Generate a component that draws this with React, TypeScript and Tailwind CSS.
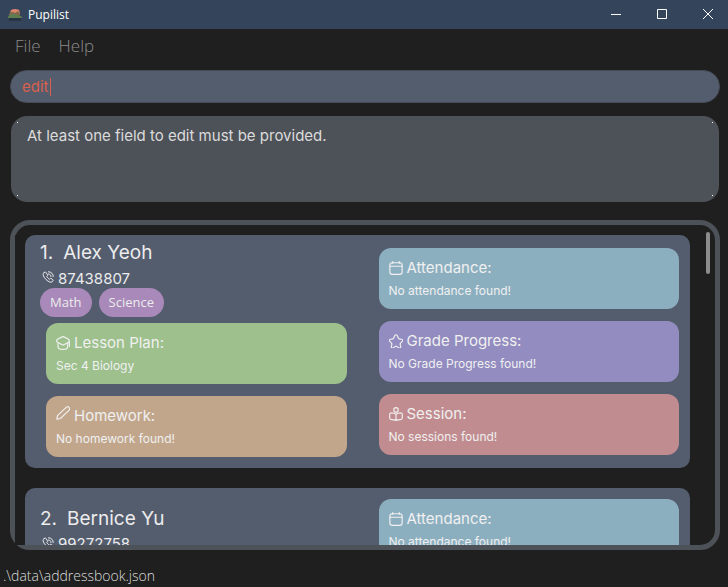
import { useState, type ReactNode } from "react";

type IconName = "phone" | "cap" | "pencil" | "calendar" | "star" | "reader";

const iconShapes: Record<IconName, ReactNode> = {
  phone: (
    <>
      <path d="M5 2.500 3 4.500c-2 2.500 0 7.500 5 12.500s10 6.500 12.500 4.500l1.500-2c.6-.8.4-1.600-.4-2.200l-3.300-2.300c-.8-.5-1.600-.4-2.200.3l-1 1.200c-1.800-.6-5-3.700-5.600-5.600l1.200-1c.7-.6.8-1.400.3-2.200L8 3C7.200 1.900 6 1.500 5 2.500Z" />
      <path d="M13 1.500c5.500 0 9.500 4 9.500 9.500M13 6c3 0 5 2 5 5" />
    </>
  ),
  cap: (
    <>
      <path d="M10.500 1.500 2.500 5.500c-1.800 1.200-1.800 4 0 5.200l8 4.200c1 .6 2 .6 3 0l8-4.200c1.500-1 1.500-4 0-5.200l-8-4c-1-.6-2-.6-3 0Z" />
      <path d="M3.500 12.500v6c0 3 4.500 4.500 8.500 4.500s8-1.500 8-4.500v-6M23 9v9" />
    </>
  ),
  pencil: (
    <path d="M18 2 2.500 16.500 1.500 22.500l6-1L22.500 7c1-1.500 1-3-.3-4.500S19.500.8 18 2Z" />
  ),
  calendar: (
    <>
      <rect x="1.500" y="3" width="21" height="20" rx="4" />
      <path d="M1.500 9h21M6.500 1v3M17.500 1v3" />
    </>
  ),
  star: (
    <path d="m14.200 3 2 4.200c.3.600 1 1.100 1.700 1.200l3.500.600c2.300.4 2.800 2 1.200 3.700l-2.800 2.900c-.5.500-.7 1.400-.6 2l.8 3.500c.6 2.700-.8 3.700-3.200 2.300l-3.600-2.100c-.6-.4-1.700-.4-2.300 0l-3.600 2.100c-2.400 1.400-3.800.4-3.200-2.300l.8-3.500c.1-.6-.1-1.500-.6-2l-2.800-2.900c-1.600-1.700-1.100-3.300 1.200-3.700l3.500-.6c.6-.1 1.400-.6 1.700-1.200L9.800 3c1.100-2.200 3.300-2.200 4.400 0Z" />
  ),
  reader: (
    <>
      <circle cx="12" cy="5" r="3.800" />
      <path d="M12 12.500v10M12 12.500C9.500 10.800 7 10 4.500 10c-2 0-3.300 1-3.300 3V18.500c0 2 1.300 3 3.300 3 2.500 0 5 .3 7.500 1.500 2.500-1.200 5-1.500 7.500-1.500 2 0 3.300-1 3.300-3V13c0-2-1.300-3-3.300-3-2.500 0-5 .8-7.500 2.500Z" />
    </>
  ),
};

function Icon({ name, className }: { name: IconName; className: string }) {
  return (
    <svg viewBox="0 0 24 24" fill="none" stroke="currentColor" strokeWidth="2" strokeLinecap="round" strokeLinejoin="round" className={className} aria-hidden="true">
      {iconShapes[name]}
    </svg>
  );
}

type Section = { icon: IconName; title: string; text: string; color: string };

function InfoCard({ icon, title, text, color }: Section) {
  return (
    <section className={`m-[6px] rounded-xl px-[10px] py-2 text-[#f0f0f0] ${color}`}>
      <h3 className="flex items-center gap-1 text-[15px] leading-6">
        <Icon name={icon} className={icon === "pencil" ? "mb-[6px] size-[14px] shrink-0" : "size-[14px] shrink-0"} />
        {title}
      </h3>
      <p className="text-[12px] leading-[21px]">{text}</p>
    </section>
  );
}

type Pupil = { id: number; name: string; phone: string; tags: string[]; work: Section[]; records: Section[] };

const attendance: Section = { icon: "calendar", title: "Attendance:", text: "No attendance found!", color: "bg-[#8cafc0]" };

const pupils: Pupil[] = [
  {
    id: 1,
    name: "Alex Yeoh",
    phone: "87438807",
    tags: ["Math", "Science"],
    work: [
      { icon: "cap", title: "Lesson Plan:", text: "Sec 4 Biology", color: "bg-[#9dc08d]" },
      { icon: "pencil", title: "Homework:", text: "No homework found!", color: "bg-[#c1a68c]" },
    ],
    records: [
      attendance,
      { icon: "star", title: "Grade Progress:", text: "No Grade Progress found!", color: "bg-[#928cc0]" },
      { icon: "reader", title: "Session:", text: "No sessions found!", color: "bg-[#c18c8f]" },
    ],
  },
  { id: 2, name: "Bernice Yu", phone: "99272758", tags: [], work: [], records: [attendance] },
];

function PupilCard({ pupil }: { pupil: Pupil }) {
  return (
    <li className="grid shrink-0 grid-cols-2 items-center gap-x-5 rounded-[10px] bg-[#545d6e] py-[5px] pr-[5px] pl-[15px] text-[#ececec]">
      <div>
        <h2 className="flex gap-[10px] text-[19px] leading-[26px]">
          <span>{pupil.id}.</span>
          {pupil.name}
        </h2>
        <p className="flex h-[22px] items-center gap-1 pt-1 pl-[2px] text-[15px]">
          <Icon name="phone" className="mb-1 size-3" />
          {pupil.phone}
        </p>
        {pupil.tags.length > 0 && (
          <ul className="flex gap-[7px] font-['Open_Sans',sans-serif] text-[13px] leading-[29px] font-medium">
            {pupil.tags.map((tag) => (
              <li key={tag} className="rounded-full bg-[#a889b9] px-[10px]">{tag}</li>
            ))}
          </ul>
        )}
        <div className="flex flex-col">
          {pupil.work.map((section) => (
            <InfoCard key={section.title} {...section} />
          ))}
        </div>
      </div>
      <div className="flex flex-col">
        {pupil.records.map((section) => (
          <InfoCard key={section.title} {...section} />
        ))}
      </div>
    </li>
  );
}

function TitleBar() {
  return (
    <header className="flex h-[29px] shrink-0 items-center overflow-hidden bg-[#34455b] pl-2 font-['Open_Sans',sans-serif] text-white">
      <svg viewBox="0 0 14 14" className="size-[14px]" aria-hidden="true">
        <path d="M3 2Q7 0 11 2l1 3H2Z" fill="#dc8670" />
        <path d="M2 4h3l2 1 3-2 2 2v2H1Z" fill="#87684b" />
        <path d="M0 9Q2 5 7 6t7 3v1H0Z" fill="#5e7e52" />
        <path d="M1 10h12v3H1Z" fill="#263445" />
      </svg>
      <h1 className="ml-[6px] flex-1 text-[12px]">Pupilist</h1>
      <div className="-mr-[3px] flex h-full items-center pb-[2px]">
        <button type="button" aria-label="Minimize" className="flex h-full w-[46px] items-center justify-center">
          <svg viewBox="0 0 10 10" className="size-[10px]" stroke="currentColor"><path d="M0 5.500h10" /></svg>
        </button>
        <button type="button" aria-label="Maximize" className="flex h-full w-[46px] items-center justify-center">
          <svg viewBox="0 0 10 10" className="size-[10px]" stroke="currentColor" fill="none"><path d="M.5.5h9v9h-9Z" /></svg>
        </button>
        <button type="button" aria-label="Close" className="flex h-full w-[46px] items-center justify-center">
          <svg viewBox="0 0 10 10" className="size-[10px]" stroke="currentColor"><path d="m0 0 10 10M10 0 0 10" /></svg>
        </button>
      </div>
    </header>
  );
}

export default function App() {
  const [command, setCommand] = useState("edit");
  return (
    <div className="flex h-screen flex-col bg-[#1f1f1f] font-[Inter,sans-serif]">
      <TitleBar />
      <nav className="flex h-[41px] shrink-0 items-center gap-[18px] px-[15px] pb-2 font-['Open_Sans',sans-serif] text-[17px] font-light text-[#8c8c8c]">
        <button type="button">File</button>
        <button type="button">Help</button>
      </nav>
      <main className="flex min-h-0 flex-1 flex-col pr-2 pl-[10px]">
        <div className="relative shrink-0">
          <input
            aria-label="Command"
            value={command}
            onChange={(e) => setCommand(e.target.value)}
            className="block h-[33px] w-full rounded-full border border-[#454c57] bg-[#545d6e] px-[11px] text-[15px] text-[#d9614c] outline-none"
          />
          <span className="absolute top-[8px] left-[40px] h-[18px] w-px bg-[#d9614c]" />
        </div>
        <output className="relative mx-px mt-[13px] block h-[86px] shrink-0 rounded-2xl bg-[#4d5158] px-4 py-2 text-[15px] leading-6 text-[#dcdcdc]">
          At least one field to edit must be provided.
          <span className="absolute top-[6px] left-[6px] size-px bg-white" />
          <span className="absolute top-[6px] right-[6px] size-px bg-white" />
          <span className="absolute bottom-[6px] left-[6px] size-px bg-white" />
          <span className="absolute right-[6px] bottom-[6px] size-px bg-white" />
        </output>
        <div className="mt-[18px] flex min-h-0 flex-1 rounded-[20px] border-[5px] border-[#4d5158] pt-[10px]">
          <ul className="flex min-w-0 flex-1 flex-col gap-5 overflow-hidden bg-[#1f1f1f] pl-[10px]">
            {pupils.map((pupil) => (
              <PupilCard key={pupil.id} pupil={pupil} />
            ))}
          </ul>
          <div className="-mt-[3px] w-[25px] shrink-0 pl-4">
            <div className="h-[42px] w-1 rounded-full bg-[#8c8c8c]" />
          </div>
        </div>
      </main>
      <footer className="flex h-[37px] shrink-0 items-center px-[3px] pt-[14px] font-['Open_Sans',sans-serif] text-[14px] font-light text-[#dcdcdc]">
        .\data\addressbook.json
      </footer>
    </div>
  );
}
